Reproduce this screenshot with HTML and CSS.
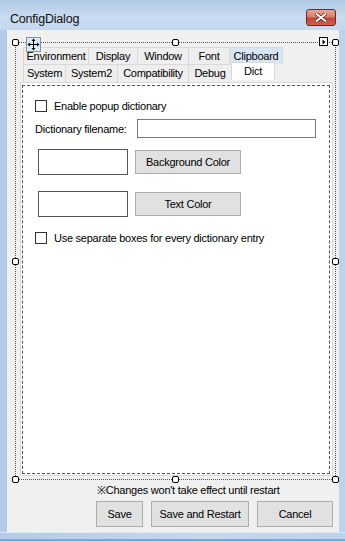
FILE: index.html
```html
<!DOCTYPE html>
<html lang="en">
<head>
    <meta charset="UTF-8">
    <meta name="viewport" content="width=device-width, initial-scale=1.0">
    <title>ConfigDialog</title>
    <link rel="stylesheet" href="styles.css">
</head>
<body>
    <div class="window">
        <div class="titlebar">
            <span class="title">ConfigDialog</span>
            <button class="close">
                <svg width="12" height="9" viewBox="0 0 12 9">
                    <path d="M1.5 1 L10.5 8 M10.5 1 L1.5 8" stroke="#5a1a14" stroke-width="3.4" stroke-linecap="round"/>
                    <path d="M1.5 1 L10.5 8 M10.5 1 L1.5 8" stroke="#ffffff" stroke-width="2" stroke-linecap="round"/>
                </svg>
            </button>
        </div>

        <div class="client">
            <div class="design">
                <span class="handle h-tl"></span>
                <span class="handle h-tc"></span>
                <span class="handle h-tr"></span>
                <span class="handle h-ml"></span>
                <span class="handle h-mr"></span>
                <span class="handle h-bl"></span>
                <span class="handle h-bc"></span>
                <span class="handle h-br"></span>

                <span class="move-glyph">
                    <svg width="13" height="13" viewBox="0 0 13 13">
                        <path d="M6.5 1 V12 M1 6.5 H12" stroke="#000" stroke-width="1"/>
                        <path d="M6.5 0.5 L4.5 3 H8.5 Z M6.5 12.5 L4.5 10 H8.5 Z M0.5 6.5 L3 4.5 V8.5 Z M12.5 6.5 L10 4.5 V8.5 Z" fill="#000"/>
                    </svg>
                </span>
                <span class="smart-tag">
                    <svg width="6" height="6" viewBox="0 0 6 6"><path d="M1.5 0.5 L4.5 3 L1.5 5.5 Z" fill="#000"/></svg>
                </span>

                <div class="tabs">
                    <div class="tab-row">
                        <span class="tab w-env">Environment</span>
                        <span class="tab w-display">Display</span>
                        <span class="tab w-window">Window</span>
                        <span class="tab w-font">Font</span>
                        <span class="tab w-clip hover">Clipboard</span>
                    </div>
                    <div class="tab-row">
                        <span class="tab w-system">System</span>
                        <span class="tab w-system2">System2</span>
                        <span class="tab w-compat">Compatibility</span>
                        <span class="tab w-debug">Debug</span>
                        <span class="tab w-dict active">Dict</span>
                    </div>

                    <div class="tab-page">
                        <div class="page-inner">
                            <div class="check-row">
                                <span class="checkbox"></span>
                                <span>Enable popup dictionary</span>
                            </div>
                            <div class="field-row">
                                <span class="field-label">Dictionary filename:</span>
                                <span class="textbox"></span>
                            </div>
                            <div class="color-row">
                                <span class="swatch"></span>
                                <button class="btn color-btn">Background Color</button>
                            </div>
                            <div class="color-row second">
                                <span class="swatch"></span>
                                <button class="btn color-btn">Text Color</button>
                            </div>
                            <div class="check-row last">
                                <span class="checkbox"></span>
                                <span>Use separate boxes for every dictionary entry</span>
                            </div>
                        </div>
                    </div>
                </div>
            </div>

            <p class="note">※Changes won't take effect until restart</p>
            <div class="actions">
                <button class="btn btn-save">Save</button>
                <button class="btn btn-restart">Save and Restart</button>
                <button class="btn btn-cancel">Cancel</button>
            </div>
        </div>
        <div class="frame-bottom"></div>
    </div>
</body>
</html>
```

FILE: styles.css
```css
* {
    box-sizing: border-box;
}
body {
    margin: 0;
    font-family: "Liberation Sans", Arial, sans-serif;
    font-size: 11px;
    letter-spacing: -0.25px;
    color: #000;
    background: #b9d1ea;
}
.window {
    width: 345px;
    height: 541px;
    display: flex;
    flex-direction: column;
    background: linear-gradient(90deg, #b4cce8 0%, #c4d8ee 60%, #bcd3ec 100%);
    overflow: hidden;
}
.titlebar {
    height: 30px;
    display: flex;
    align-items: flex-start;
    padding: 0 9px 0 10px;
    background: linear-gradient(180deg, #b0c9e6 0%, #c8dbf0 55%, #c4d8ee 100%);
}
.title {
    font-size: 12.5px;
    letter-spacing: -0.2px;
    margin-top: 12px;
    color: #111;
    flex: 1;
}
.close {
    width: 30px;
    height: 17px;
    margin-top: 9px;
    padding: 0;
    border: 1px solid #6e2a22;
    border-radius: 3px;
    background: linear-gradient(180deg, #e8a99a 0%, #d77d6c 45%, #c4483a 55%, #cc5f4c 100%);
    display: flex;
    align-items: center;
    justify-content: center;
}
.client {
    flex: 1;
    margin: 0 6px 0 7px;
    background: #f0f0f0;
    padding-top: 12px;
}
.frame-bottom {
    height: 9px;
    border-top: 1px solid #dfe9f5;
    border-bottom: 2px solid #5fb3d6;
}

/* designer selection */
.design {
    position: relative;
    width: 321px;
    height: 438px;
    margin-left: 8px;
    border: 1px dotted #555;
    padding: 4px 0 0 4px;
}
.handle {
    position: absolute;
    width: 7px;
    height: 7px;
    border: 1px solid #000;
    border-radius: 2px;
    background: #fff;
    z-index: 2;
}
.h-tl { left: -4px; top: -4px; }
.h-tc { left: 156px; top: -4px; }
.h-tr { right: -4px; top: -4px; }
.h-ml { left: -4px; top: 215px; }
.h-mr { right: -4px; top: 215px; }
.h-bl { left: -4px; bottom: -4px; }
.h-bc { left: 156px; bottom: -4px; }
.h-br { right: -4px; bottom: -4px; }
.move-glyph {
    position: absolute;
    left: 10px;
    top: -6px;
    width: 15px;
    height: 15px;
    border: 1px solid #7a96bd;
    background: #dfe9f6;
    display: flex;
    align-items: center;
    justify-content: center;
    z-index: 2;
}
.smart-tag {
    position: absolute;
    left: 303px;
    top: -6px;
    width: 9px;
    height: 9px;
    border: 1px solid #000;
    background: #fff;
    display: flex;
    align-items: center;
    justify-content: center;
    z-index: 2;
}

/* tab control */
.tabs {
    width: 313px;
}
.tab-row {
    display: flex;
    padding-left: 3px;
}
.tab {
    height: 17px;
    line-height: 17px;
    text-align: center;
    white-space: nowrap;
    background: #eeeeee;
    border: 1px solid #d9d9d9;
    border-right: none;
    border-bottom: none;
}
.tab-row + .tab-row .tab {
    height: 18px;
    line-height: 17px;
}
.tab.hover {
    background: #d8e6f3;
    border-right: 1px solid #d9d9d9;
}
.tab.active {
    background: #fff;
    height: 20px;
    margin-top: -2px;
    line-height: 17px;
    border-right: 1px solid #d9d9d9;
    position: relative;
    margin-bottom: -1px;
}
.w-env { width: 65px; }
.w-display { width: 49px; }
.w-window { width: 51px; }
.w-font { width: 41px; }
.w-clip { width: 54px; }
.w-system { width: 42px; }
.w-system2 { width: 52px; }
.w-compat { width: 71px; }
.w-debug { width: 43px; }
.w-dict { width: 44px; }

.tab-page {
    height: 394px;
    background: #fff;
    border: 1px solid #d9d9d9;
    padding: 2px 2px 2px 1px;
}
.page-inner {
    height: 389px;
    width: 308px;
    border: 1px dashed #555;
    padding: 14px 0 0 12px;
}
.check-row {
    display: flex;
    align-items: center;
    height: 12px;
}
.checkbox {
    width: 12px;
    height: 12px;
    border: 1px solid #333;
    background: #fff;
    margin-right: 7px;
}
.field-row {
    display: flex;
    align-items: center;
    margin-top: 7px;
}
.field-label {
    width: 102px;
}
.textbox {
    width: 179px;
    height: 19px;
    border: 1px solid #7a7a7a;
    background: #fff;
}
.color-row {
    display: flex;
    align-items: center;
    margin-top: 11px;
    padding-left: 3px;
}
.color-row.second {
    margin-top: 16px;
}
.swatch {
    width: 90px;
    height: 26px;
    border: 1px solid #555;
    background: #fff;
}
.check-row.last {
    margin-top: 15px;
}

/* buttons */
.btn {
    font-family: "Liberation Sans", Arial, sans-serif;
    font-size: 11px;
    letter-spacing: -0.25px;
    color: #000;
    background: #e1e1e1;
    border: 1px solid #adadad;
    padding: 0;
}
.color-btn {
    width: 106px;
    height: 24px;
    margin-left: 7px;
}
.note {
    margin: 4px 0 0 90px;
    height: 13px;
    line-height: 13px;
}
.actions {
    display: flex;
    justify-content: flex-end;
    gap: 8px;
    padding-right: 6px;
    margin-top: 4px;
}
.actions .btn {
    height: 26px;
}
.btn-save { width: 47px; }
.btn-restart { width: 98px; }
.btn-cancel { width: 76px; }
```
